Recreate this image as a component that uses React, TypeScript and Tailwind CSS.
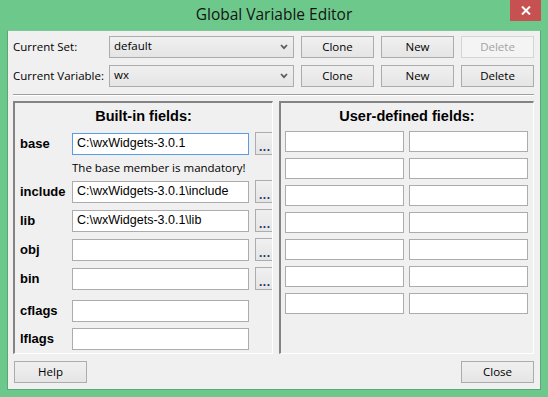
import React from "react";

const ui = "font-['Open_Sans',sans-serif]";
const arial = "font-['Liberation_Sans',Arial,sans-serif]";

function Btn({ label, disabled, className = "" }: { label: string; disabled?: boolean; className?: string }) {
  return (
    <button
      className={
        "h-[22px] w-[73px] border text-[11.5px] leading-none flex items-center justify-center " +
        ui +
        " " +
        (disabled
          ? "border-[#d5d5d5] bg-[#f4f4f4] text-[#a3a3a3]"
          : "border-[#acacac] bg-linear-to-b from-[#f0f0f0] to-[#e5e5e5] text-black") +
        " " +
        className
      }
    >
      {label}
    </button>
  );
}

function Combo({ value }: { value: string }) {
  return (
    <div
      className={
        "h-[22px] w-[185px] border border-[#acacac] bg-linear-to-b from-[#f0f0f0] to-[#e5e5e5] flex items-center pl-[4px] pr-[5px] text-[11.5px] text-black " +
        ui
      }
    >
      <span className="flex-1 leading-none -mt-[2px]">{value}</span>
      <svg width="8" height="6" viewBox="0 0 8 6">
        <path d="M1 1 L4 4.2 L7 1" stroke="#5a5a5a" strokeWidth="1.7" fill="none" />
      </svg>
    </div>
  );
}

function TextBox({ value = "", w, h = 22, focused }: { value?: string; w: string; h?: number; focused?: boolean }) {
  return (
    <div
      className={
        "bg-white border flex items-center pl-[4px] text-[12.5px] text-black leading-none " +
        arial +
        " " +
        w +
        " " +
        (h === 21 ? "h-[21px] " : h === 23 ? "h-[23px] " : "h-[22px] ") +
        (focused ? "border-[#569de5]" : "border-[#acacac]")
      }
    >
      {value}
    </div>
  );
}

function Dots() {
  return (
    <button
      className={
        "h-[23px] w-[24px] shrink-0 border border-[#acacac] bg-linear-to-b from-[#f0f0f0] to-[#e5e5e5] text-[12px] font-bold leading-none text-[#1a3a6a] flex items-start justify-start pl-[3px] pt-[8px] tracking-[0.5px] " +
        arial
      }
    >
      ...
    </button>
  );
}

function FieldRow({ label, value, focused, button = true }: { label: string; value?: string; focused?: boolean; button?: boolean }) {
  return (
    <div className="flex items-center h-[23px]">
      <div className={"w-[57px] shrink-0 pl-[5px] text-[13px] font-bold text-black " + arial}>{label}</div>
      <TextBox value={value} w="w-[177px] shrink-0" focused={focused} />
      {button && <div className="ml-[6px] flex"><Dots /></div>}
    </div>
  );
}

export default function App() {
  const userRows = [0, 1, 2, 3, 4, 5, 6];
  return (
    <div className="w-[548px] h-[397px] bg-[#6cc98b] flex flex-col relative overflow-hidden">
      <div className={"h-[30px] flex items-center justify-center text-[15.5px] text-[#141414] " + ui}>
        Global Variable Editor
      </div>
      <div className="absolute top-0 right-[7px] w-[31px] h-[21px] bg-[#c75050] flex items-center justify-center">
        <svg width="10" height="9" viewBox="0 0 10 9">
          <path d="M1 0.5 L9 8.5 M9 0.5 L1 8.5" stroke="white" strokeWidth="2" />
        </svg>
      </div>
      <div className="mx-[7px] border border-[#5da676] border-t-[#7fc598] h-[360px]">
        <div className="h-[358px] bg-[#f0f0f0] flex flex-col pt-[5px] pl-[5px] pr-[6px] pb-[6px]">
          <div className="flex flex-col gap-[7px]">
            <div className="flex items-center">
              <div className={"w-[96px] text-[11.5px] text-black " + ui}>Current Set:</div>
              <Combo value="default" />
              <div className="flex gap-[7px] ml-[7px]">
                <Btn label="Clone" />
                <Btn label="New" />
                <Btn label="Delete" disabled />
              </div>
            </div>
            <div className="flex items-center">
              <div className={"w-[96px] text-[11.5px] text-black " + ui}>Current Variable:</div>
              <Combo value="wx" />
              <div className="flex gap-[7px] ml-[7px]">
                <Btn label="Clone" />
                <Btn label="New" />
                <Btn label="Delete" />
              </div>
            </div>
          </div>
          <div className="mt-[7px] h-[2px] border-t border-[#a0a0a0] border-b border-b-white" />
          <div className="mt-[5px] flex gap-[6px] h-[253px]">
            <div className="w-[260px] h-full border-l-2 border-t-2 border-r border-b border-l-[#838383] border-t-[#838383] border-r-white border-b-white overflow-hidden flex flex-col">
              <div className={"mt-[5px] h-[18px] flex items-center justify-center text-[14.5px] font-bold text-black " + arial}>
                Built-in fields:
              </div>
              <div className="mt-[6px] flex flex-col">
                <FieldRow label="base" value="C:\wxWidgets-3.0.1" focused />
                <div className={"h-[25px] flex items-center pl-[57px] text-[11.5px] text-black " + ui}>
                  The base member is mandatory!
                </div>
                <div className="flex flex-col gap-[6px]">
                  <FieldRow label="include" value="C:\wxWidgets-3.0.1\include" />
                  <FieldRow label="lib" value="C:\wxWidgets-3.0.1\lib" />
                  <FieldRow label="obj" />
                  <FieldRow label="bin" />
                </div>
                <div className="mt-[9px] flex flex-col gap-[5px]">
                  <FieldRow label="cflags" button={false} />
                  <FieldRow label="lflags" button={false} />
                </div>
              </div>
            </div>
            <div className="w-[255px] h-full border-l-2 border-t-2 border-r border-b border-l-[#838383] border-t-[#838383] border-r-white border-b-white flex flex-col">
              <div className={"mt-[5px] h-[18px] flex items-center justify-center text-[14.5px] font-bold text-black " + arial}>
                User-defined fields:
              </div>
              <div className="mt-[5px] pl-[4px] flex flex-col gap-[6px]">
                {userRows.map((r) => (
                  <div key={r} className="flex gap-[5px]">
                    <TextBox w="w-[119px]" h={21} />
                    <TextBox w="w-[119px]" h={21} />
                  </div>
                ))}
              </div>
            </div>
          </div>
          <div className="mt-[7px] flex justify-between pl-[1px]">
            <Btn label="Help" />
            <Btn label="Close" />
          </div>
        </div>
      </div>
    </div>
  );
}
